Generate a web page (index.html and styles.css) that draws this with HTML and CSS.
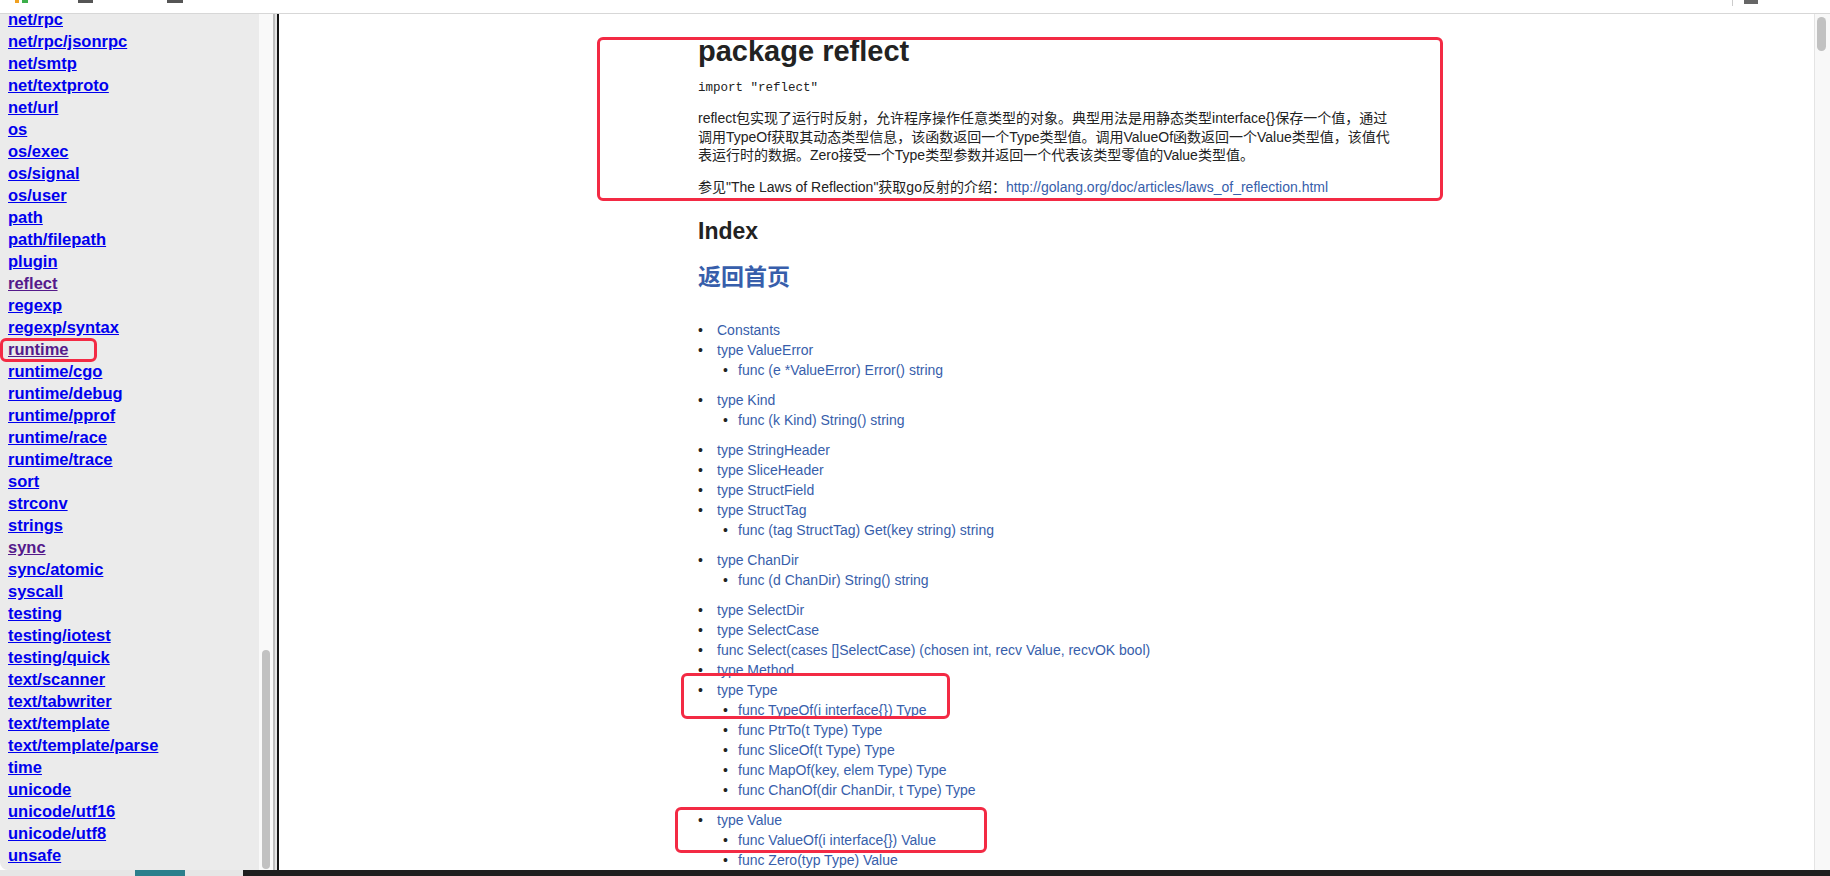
FILE: index.html
```html
<!DOCTYPE html>
<html lang="zh-CN">
<head>
  <meta charset="UTF-8">
  <title>reflect - Go标准库文档</title>
  <link rel="stylesheet" href="styles.css">
</head>
<body>

  <!-- 浏览器工具栏底边 -->
  <div class="topbar">
    <span class="tb-icon tb-orange"></span>
    <span class="tb-icon tb-green"></span>
    <span class="tb-btn tb-btn-1"></span>
    <span class="tb-btn tb-btn-2"></span>
    <span class="tb-sep"></span>
    <span class="tb-btn tb-btn-3"></span>
  </div>

  <div class="window">
    <!-- 左侧包列表 -->
    <div class="sidebar">
      <ul class="pkg-list">
        <li><a href="#">net/rpc</a></li>
        <li><a href="#">net/rpc/jsonrpc</a></li>
        <li><a href="#">net/smtp</a></li>
        <li><a href="#">net/textproto</a></li>
        <li><a href="#">net/url</a></li>
        <li><a href="#">os</a></li>
        <li><a href="#">os/exec</a></li>
        <li><a href="#">os/signal</a></li>
        <li><a href="#">os/user</a></li>
        <li><a href="#">path</a></li>
        <li><a href="#">path/filepath</a></li>
        <li><a href="#">plugin</a></li>
        <li><a href="#" class="visited">reflect</a></li>
        <li><a href="#">regexp</a></li>
        <li><a href="#">regexp/syntax</a></li>
        <li><a href="#" class="visited">runtime</a></li>
        <li><a href="#">runtime/cgo</a></li>
        <li><a href="#">runtime/debug</a></li>
        <li><a href="#">runtime/pprof</a></li>
        <li><a href="#">runtime/race</a></li>
        <li><a href="#">runtime/trace</a></li>
        <li><a href="#">sort</a></li>
        <li><a href="#">strconv</a></li>
        <li><a href="#">strings</a></li>
        <li><a href="#" class="visited">sync</a></li>
        <li><a href="#">sync/atomic</a></li>
        <li><a href="#">syscall</a></li>
        <li><a href="#">testing</a></li>
        <li><a href="#">testing/iotest</a></li>
        <li><a href="#">testing/quick</a></li>
        <li><a href="#">text/scanner</a></li>
        <li><a href="#">text/tabwriter</a></li>
        <li><a href="#">text/template</a></li>
        <li><a href="#">text/template/parse</a></li>
        <li><a href="#">time</a></li>
        <li><a href="#">unicode</a></li>
        <li><a href="#">unicode/utf16</a></li>
        <li><a href="#">unicode/utf8</a></li>
        <li><a href="#">unsafe</a></li>
      </ul>
    </div>
    <div class="side-track"><div class="side-thumb"></div></div>
    <div class="divider"></div>

    <!-- 右侧文档 -->
    <div class="main">
      <div class="content">
        <h1>package reflect</h1>
        <p class="import">import "reflect"</p>
        <p class="intro">reflect包实现了运行时反射，允许程序操作任意类型的对象。典型用法是用静态类型interface{}保存一个值，通过调用TypeOf获取其动态类型信息，该函数返回一个Type类型值。调用ValueOf函数返回一个Value类型值，该值代表运行时的数据。Zero接受一个Type类型参数并返回一个代表该类型零值的Value类型值。</p>
        <p class="intro see">参见"The Laws of Reflection"获取go反射的介绍：<a href="#">http://golang.org/doc/articles/laws_of_reflection.html</a></p>

        <h2>Index</h2>
        <h2 class="home"><a href="#">返回首页</a></h2>

        <ul class="index">
          <li><a href="#">Constants</a></li>
          <li><a href="#">type ValueError</a>
            <ul>
              <li><a href="#">func (e *ValueError) Error() string</a></li>
            </ul>
          </li>
          <li><a href="#">type Kind</a>
            <ul>
              <li><a href="#">func (k Kind) String() string</a></li>
            </ul>
          </li>
          <li><a href="#">type StringHeader</a></li>
          <li><a href="#">type SliceHeader</a></li>
          <li><a href="#">type StructField</a></li>
          <li><a href="#">type StructTag</a>
            <ul>
              <li><a href="#">func (tag StructTag) Get(key string) string</a></li>
            </ul>
          </li>
          <li><a href="#">type ChanDir</a>
            <ul>
              <li><a href="#">func (d ChanDir) String() string</a></li>
            </ul>
          </li>
          <li><a href="#">type SelectDir</a></li>
          <li><a href="#">type SelectCase</a></li>
          <li><a href="#">func Select(cases []SelectCase) (chosen int, recv Value, recvOK bool)</a></li>
          <li><a href="#">type Method</a></li>
          <li><a href="#">type Type</a>
            <ul>
              <li><a href="#">func TypeOf(i interface{}) Type</a></li>
              <li><a href="#">func PtrTo(t Type) Type</a></li>
              <li><a href="#">func SliceOf(t Type) Type</a></li>
              <li><a href="#">func MapOf(key, elem Type) Type</a></li>
              <li><a href="#">func ChanOf(dir ChanDir, t Type) Type</a></li>
            </ul>
          </li>
          <li><a href="#">type Value</a>
            <ul>
              <li><a href="#">func ValueOf(i interface{}) Value</a></li>
              <li><a href="#">func Zero(typ Type) Value</a></li>
            </ul>
          </li>
        </ul>
      </div>
    </div>
    <div class="main-track"><div class="main-thumb"></div></div>
  </div>

  <!-- 底部 Dock 边缘 -->
  <div class="dock">
    <span class="dock-light"></span>
    <span class="dock-teal"></span>
    <span class="dock-gap"></span>
    <span class="dock-dark"></span>
  </div>

  <!-- 截图上的红色标注框 -->
  <div class="mark mark-head"></div>
  <div class="mark mark-runtime"></div>
  <div class="mark mark-type"></div>
  <div class="mark mark-value"></div>

</body>
</html>
```

FILE: styles.css
```css
* {
  box-sizing: border-box;
}
body {
  margin: 0;
  width: 1830px;
  height: 876px;
  overflow: hidden;
  position: relative;
  font-family: "Liberation Sans", "Noto Sans CJK SC", sans-serif;
  background-color: #fff;
  color: #222;
}

/* 工具栏 */
.topbar {
  height: 14px;
  border-bottom: 1px solid #d7d7d7;
  display: flex;
  align-items: flex-start;
}
.tb-icon {
  width: 4px;
  height: 3px;
}
.tb-orange {
  margin-left: 15px;
  background-color: #f0a020;
}
.tb-green {
  margin-left: 3px;
  width: 6px;
  background-color: #3cae4a;
}
.tb-btn {
  height: 3px;
  background-color: #555;
}
.tb-btn-1 {
  margin-left: 50px;
  width: 15px;
}
.tb-btn-2 {
  margin-left: 74px;
  width: 16px;
}
.tb-sep {
  margin-left: 1549px;
  width: 1px;
  height: 6px;
  background-color: #ccc;
}
.tb-btn-3 {
  margin-left: 11px;
  width: 14px;
  height: 4px;
  background-color: #666;
}

/* 窗口 */
.window {
  display: flex;
  height: 856px;
}
.sidebar {
  width: 259px;
  background-color: #ebebeb;
  overflow: hidden;
  border-bottom-left-radius: 8px;
}
.pkg-list {
  list-style: none;
  margin: -6px 0 0;
  padding: 0 0 0 8px;
}
.pkg-list li {
  font-size: 16.5px;
  line-height: 22px;
  font-weight: bold;
  white-space: nowrap;
}
.pkg-list a {
  color: #0000ee;
  text-decoration: underline;
}
.pkg-list a.visited {
  color: #551a8b;
}
.side-track {
  width: 14px;
  background-color: #f9f9f9;
  display: flex;
  flex-direction: column;
  justify-content: flex-end;
  padding: 0 0 1px 3px;
}
.side-thumb {
  width: 8px;
  height: 219px;
  background-color: #c1c1c1;
  border-radius: 4px;
}
.divider {
  width: 6px;
  background-color: #e4e4e4;
  border-left: 2px solid #bdbdbd;
  border-right: 2px solid #111;
}
.main {
  flex: 1;
  overflow: hidden;
  padding-left: 3px;
  background-color: #fff;
}
.main-track {
  width: 16px;
  background-color: #f8f8f8;
  border-left: 1px solid #e4e4e4;
  padding: 3px 0 0 2px;
}
.main-thumb {
  width: 9px;
  height: 34px;
  background-color: #c1c1c1;
  border-radius: 5px;
}

/* 文档内容 */
.content {
  width: 700px;
  margin: 0 auto;
  padding-top: 20px;
}
a {
  color: #375eab;
  text-decoration: none;
}
h1 {
  margin: 0;
  font-size: 29px;
  line-height: 34px;
  font-weight: bold;
  color: #222;
}
.import {
  margin: 11px 0 0;
  font-family: "Liberation Mono", monospace;
  font-size: 12.5px;
  line-height: 18px;
}
.intro {
  margin: 12px 0 0;
  font-size: 14px;
  line-height: 18.5px;
}
.intro.see {
  margin-top: 13px;
}
h2 {
  margin: 21px 0 0;
  font-size: 23px;
  line-height: 28px;
  font-weight: bold;
  color: #222;
}
h2.home {
  margin-top: 18px;
}
.index {
  list-style: none;
  margin: 29px 0 0;
  padding: 0;
  font-size: 14px;
  line-height: 20px;
}
.index li::before {
  content: "•";
  display: inline-block;
  width: 19px;
  color: #222;
}
.index ul {
  list-style: none;
  margin: 0 0 10px;
  padding-left: 25px;
}
.index ul li::before {
  width: 15px;
}

/* Dock */
.dock {
  display: flex;
  height: 6px;
}
.dock-light {
  width: 135px;
  background-color: #e6e6e6;
}
.dock-teal {
  width: 50px;
  background-color: #2b7f8c;
}
.dock-gap {
  width: 58px;
  background-color: #e6e6e6;
}
.dock-dark {
  flex: 1;
  background-color: #1f1f1f;
}

/* 红色标注 */
.mark {
  position: absolute;
  border: 3px solid #f32a44;
  border-radius: 6px;
}
.mark-head {
  left: 597px;
  top: 37px;
  width: 846px;
  height: 164px;
}
.mark-runtime {
  left: 0;
  top: 338px;
  width: 97px;
  height: 24px;
}
.mark-type {
  left: 681px;
  top: 673px;
  width: 269px;
  height: 46px;
}
.mark-value {
  left: 675px;
  top: 807px;
  width: 312px;
  height: 46px;
}
```
